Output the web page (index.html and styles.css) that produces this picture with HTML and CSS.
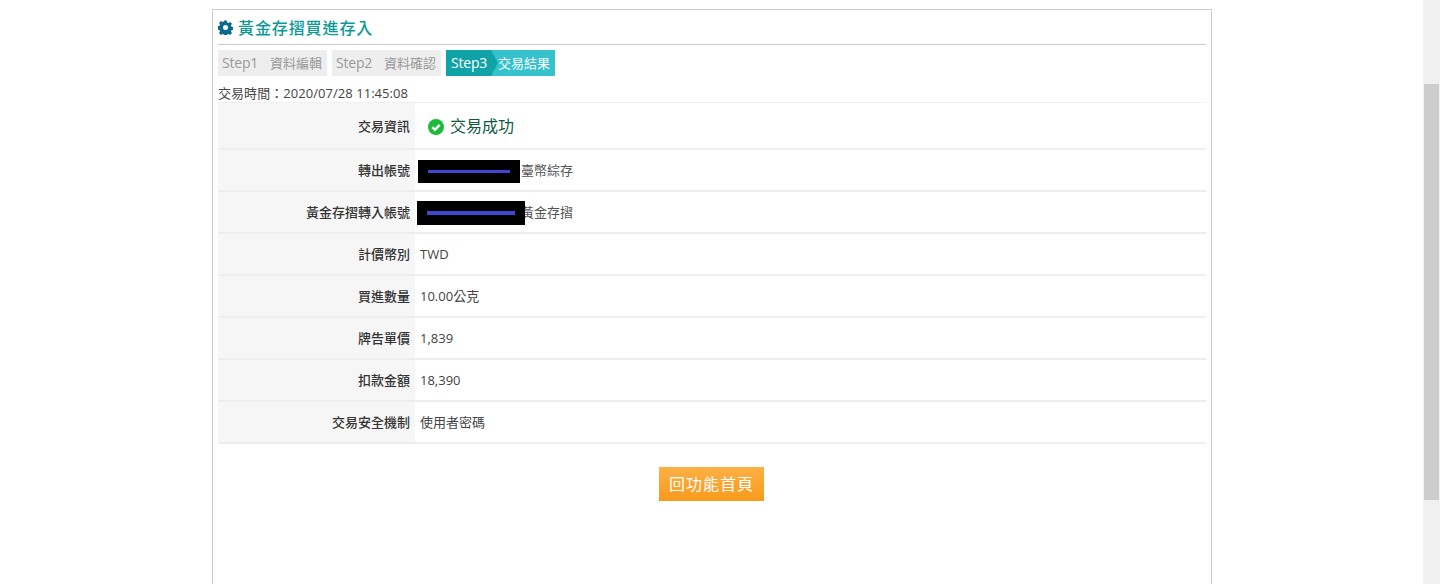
FILE: index.html
```html
<!DOCTYPE html>
<html lang="zh-Hant">
<head>
<meta charset="utf-8">
<title>黃金存摺買進存入</title>
<link rel="stylesheet" href="styles.css">
</head>
<body>
<div class="shell">
  <main class="main">
    <section class="panel">
      <h1 class="title">
        <svg class="gear" viewBox="0 0 16 16" aria-hidden="true"><path fill="#0b6b8a" fill-rule="evenodd" d="M6.6 0.6h2.8l.4 2 1.3.6 1.8-1.1 2 2-1.1 1.8.6 1.3 2 .4v2.8l-2 .4-.6 1.3 1.1 1.8-2 2-1.8-1.1-1.3.6-.4 2H6.6l-.4-2-1.3-.6-1.8 1.1-2-2 1.1-1.8-.6-1.3-2-.4V6.6l2-.4.6-1.3-1.1-1.8 2-2 1.8 1.1 1.3-.6zM8 5.3a2.7 2.7 0 1 0 0 5.4 2.7 2.7 0 0 0 0-5.4z"/></svg>
        <span>黃金存摺買進存入</span>
      </h1>
      <div class="steps">
        <div class="step"><span class="step-no-off">Step1</span><span class="step-name">資料編輯</span></div>
        <div class="step"><span class="step-no-off">Step2</span><span class="step-name">資料確認</span></div>
        <div class="step step-on"><span class="step-no">Step3</span><span class="step-now">交易結果</span></div>
      </div>
      <p class="time">交易時間：2020/07/28 11:45:08</p>
      <div class="rows">
        <div class="row row-first"><div class="key">交易資訊</div><div class="val val-ok">
          <svg class="ok" viewBox="0 0 16 16" aria-hidden="true"><circle cx="8" cy="8" r="8" fill="#1dbb3c"/><path d="M4.3 8.2l2.6 2.6 4.8-5" fill="none" stroke="#fff" stroke-width="2.4"/></svg>
          <span>交易成功</span></div></div>
        <div class="row"><div class="key">轉出帳號</div><div class="val val-acct"><span class="mask mask-a"><i></i></span><span>臺幣綜存</span></div></div>
        <div class="row"><div class="key">黃金存摺轉入帳號</div><div class="val val-acct"><span class="mask mask-b"><i></i></span><span>黃金存摺</span></div></div>
        <div class="row"><div class="key">計價幣別</div><div class="val">TWD</div></div>
        <div class="row"><div class="key">買進數量</div><div class="val">10.00公克</div></div>
        <div class="row"><div class="key">牌告單價</div><div class="val">1,839</div></div>
        <div class="row"><div class="key">扣款金額</div><div class="val">18,390</div></div>
        <div class="row"><div class="key">交易安全機制</div><div class="val">使用者密碼</div></div>
      </div>
      <div class="actions"><a class="btn" href="#">回功能首頁</a></div>
    </section>
  </main>
  <div class="scrollbar"><div class="thumb"></div></div>
</div>
</body>
</html>
```
FILE: styles.css
```css
* { box-sizing: border-box; }
html, body { margin: 0; height: 584px; overflow: hidden; background: #fff; }
body { font-family: "Open Sans", "Noto Sans CJK TC", sans-serif; font-size: 13px; color: #444; }
.shell { display: flex; height: 584px; }
.main { flex: 1; min-width: 0; padding: 9px 0 0 212px; }
.panel { width: 1000px; height: 620px; border: 1px solid #ccc; padding: 0 5px; }
.title { display: flex; align-items: center; gap: 5px; height: 35px; margin: 0; border-bottom: 1px solid #ccc; font-size: 16px; font-weight: 500; letter-spacing: .9px; color: #0a9a96; }
.gear { width: 15px; height: 15px; }
.title span { margin-top: -1px; }
.steps { display: flex; gap: 5px; margin-top: 5px; height: 26px; }
.step { display: flex; align-items: center; gap: 12px; width: 109px; padding-left: 4px; background: #eee; color: #999; font-size: 14px; line-height: 26px; }
.step-no-off { letter-spacing: -.2px; }
.step-name { font-size: 13px; }
.step-on { position: relative; gap: 0; padding: 0; background: #36c2cc; color: #fff; }
.step-no { width: 45px; height: 26px; padding-left: 5px; background: #0fa3a8; letter-spacing: -.2px; }
.step-on::after { content: ""; position: absolute; left: 45px; top: 0; border-left: 7px solid #0fa3a8; border-top: 13px solid transparent; border-bottom: 13px solid transparent; }
.step-now { padding-left: 7px; font-size: 13px; }
.time { margin: 8px 0 0; height: 18px; font-size: 13px; line-height: 18px; letter-spacing: .05px; color: #444; }
.rows { border-top: 1px solid #f0f0f0; }
.row { display: flex; height: 42px; border-bottom: 2px solid #eee; }
.row-first { height: 47px; }
.key { flex: 0 0 197px; display: flex; align-items: center; justify-content: flex-end; padding: 0 5px 1px 0; background: #f6f6f6; font-weight: 500; color: #333; }
.val { flex: 1; display: flex; align-items: center; padding-left: 5px; font-size: 13px; line-height: 18px; color: #444; }
.val-ok { gap: 6px; padding-left: 13px; font-size: 16px; line-height: 22px; color: #0d5a3c; }
.ok { width: 16px; height: 16px; margin-top: 3px; }
.val-acct { padding-left: 3px; color: #555; }
.mask { display: flex; align-items: center; background: #000; position: relative; }
.mask i { display: block; height: 3px; background: #4146d2; }
.mask-a { width: 102px; height: 23px; padding-left: 10px; margin: 3px 1px 0 0; }
.mask-a i { width: 82px; }
.mask-b { width: 108px; height: 24px; padding-left: 10px; margin: 2px -4px 0 -1px; }
.mask-b i { width: 88px; height: 4px; }
.actions { display: flex; justify-content: center; padding: 23px 2px 0 0; }
.btn { display: block; width: 105px; height: 34px; padding-left: 1px; line-height: 34px; text-align: center; font-size: 16px; letter-spacing: 1px; color: #fff; text-decoration: none; background: linear-gradient(#fdb045, #f79a1c); }
.scrollbar { flex: 0 0 17px; height: 584px; padding-top: 84px; background: #f0f0f0; }
.thumb { width: 15px; height: 416px; margin-left: 1px; background: #cdcdcd; }
```
